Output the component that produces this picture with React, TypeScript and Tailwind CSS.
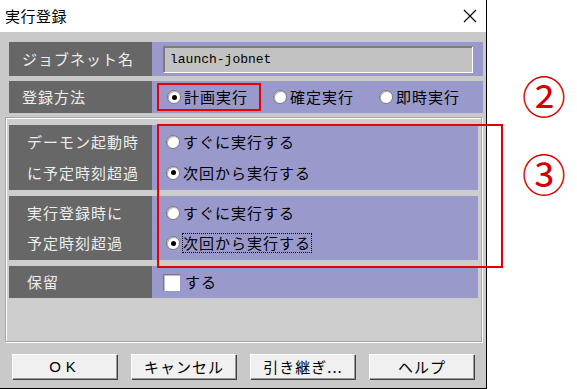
import React from 'react'

const jp = { fontFamily: '"Noto Sans CJK JP", "Noto Sans", sans-serif' }

function Radio({ checked, label, focus }: { checked?: boolean; label: string; focus?: boolean }) {
  return (
    <div className="flex items-center gap-[3px]">
      <span className="w-[14px] h-[14px] rounded-full bg-white border border-[#7a7a7a] shadow-[inset_1px_1px_0_#b0b0b0] flex items-center justify-center">
        {checked && <span className="w-[5px] h-[5px] rounded-full bg-black" />}
      </span>
      <span
        className={`text-[15px] tracking-[1px] leading-[18px] text-black ${
          focus ? 'outline outline-1 outline-dotted outline-black' : ''
        }`}
      >
        {label}
      </span>
    </div>
  )
}

function Label({ lines, className = '' }: { lines: string[]; className?: string }) {
  return (
    <div
      className={`w-[143px] shrink-0 bg-[#676767] text-[#eeeeee] text-[15px] tracking-[1px] flex flex-col justify-around ${className}`}
    >
      {lines.map((l) => (
        <span key={l} className="leading-[18px]">{l}</span>
      ))}
    </div>
  )
}

function Btn({ children }: { children: React.ReactNode }) {
  return (
    <button className="w-[105px] h-[25px] bg-[#f0f0f0] border-t border-l border-white shadow-[1px_1px_0_#404040,inset_-1px_-1px_0_#9a9a9a] text-[15px] tracking-[1px] text-black flex items-center justify-center">
      {children}
    </button>
  )
}

export default function App() {
  return (
    <div className="relative w-[577px] h-[389px] bg-white overflow-hidden" style={jp}>
      {/* Dialog */}
      <div className="w-[487px] h-[389px] border-r border-b border-black bg-[#c9c9c9] flex flex-col">
        {/* Title bar */}
        <div className="h-[32px] shrink-0 bg-white flex items-center justify-between pl-[5px] pr-[9px]">
          <span className="text-[15px] text-black tracking-[0.5px]">実行登録</span>
          <svg width="14" height="14" viewBox="0 0 14 14">
            <path d="M1 1L13 13M13 1L1 13" stroke="#111" strokeWidth="1.3" />
          </svg>
        </div>

        <div className="flex flex-col pt-[10px] pl-[9px] pr-[3px]">
          {/* ジョブネット名 */}
          <div className="flex h-[34px]">
            <Label lines={['ジョブネット名']} className="pl-[13px]" />
            <div className="flex-1 bg-[#9999cc] flex items-center pl-[11px] pr-[11px]">
              <div className="flex-1 h-[26px] bg-[#c2c2c2] border-t-2 border-l-2 border-[#7c7c7c] shadow-[1px_1px_0_#ffffff] flex items-center pl-[5px]">
                <span className="text-[13px] text-black" style={{ fontFamily: '"Liberation Mono", monospace' }}>
                  launch-jobnet
                </span>
              </div>
            </div>
          </div>

          {/* 登録方法 */}
          <div className="flex h-[32px] mt-[5px]">
            <Label lines={['登録方法']} className="pl-[13px]" />
            <div className="flex-1 bg-[#9999cc] flex items-center pl-[15px] gap-[25px]">
              <Radio checked label="計画実行" />
              <Radio label="確定実行" />
              <Radio label="即時実行" />
            </div>
          </div>

          {/* Group frame */}
          <div className="ml-[-4px] mr-[1px] mt-[4px] h-[225px] bg-[#cdcdcd] border border-[#a6a6a6] shadow-[inset_1px_1px_0_#ffffff,1px_1px_0_#ffffff] pt-[7px] pl-[3px] pr-[3px] flex flex-col gap-[6px]">
            <div className="flex h-[65px]">
              <Label lines={['デーモン起動時', 'に予定時刻超過']} className="pl-[18px] py-[2px]" />
              <div className="flex-1 bg-[#9999cc] flex flex-col justify-around pl-[14px] py-[2px]">
                <Radio label="すぐに実行する" />
                <Radio checked label="次回から実行する" />
              </div>
            </div>
            <div className="flex h-[64px]">
              <Label lines={['実行登録時に', '予定時刻超過']} className="pl-[18px] py-[2px]" />
              <div className="flex-1 bg-[#9999cc] flex flex-col justify-around pl-[14px] py-[2px]">
                <Radio label="すぐに実行する" />
                <Radio checked focus label="次回から実行する" />
              </div>
            </div>
            <div className="flex h-[32px]">
              <Label lines={['保留']} className="pl-[18px]" />
              <div className="flex-1 bg-[#9999cc] flex items-center pl-[11px] gap-[5px]">
                <span className="w-[17px] h-[17px] bg-white border-t border-l border-[#7a7a7a] shadow-[inset_1px_1px_0_#c0c0c0]" />
                <span className="text-[15px] tracking-[1px] text-black">する</span>
              </div>
            </div>
          </div>
        </div>

        {/* Buttons */}
        <div className="flex gap-[14px] pl-[12px] mt-[12px]">
          <Btn>
            <span className="tracking-[5px]" style={{ fontFamily: '"Liberation Sans", sans-serif' }}>OK</span>
          </Btn>
          <Btn>キャンセル</Btn>
          <Btn>引き継ぎ...</Btn>
          <Btn>ヘルプ</Btn>
        </div>
      </div>

      {/* Annotations */}
      <div className="absolute left-[157px] top-[83px] w-[104px] h-[28px] border-2 border-[#e60000]" />
      <div className="absolute left-[157px] top-[124px] w-[346px] h-[144px] border-2 border-[#e60000]" />
      <div className="absolute left-[522px] top-[73px] text-[44px] leading-none text-[#d40000]">②</div>
      <div className="absolute left-[522px] top-[151px] text-[44px] leading-none text-[#d40000]">③</div>
    </div>
  )
}
